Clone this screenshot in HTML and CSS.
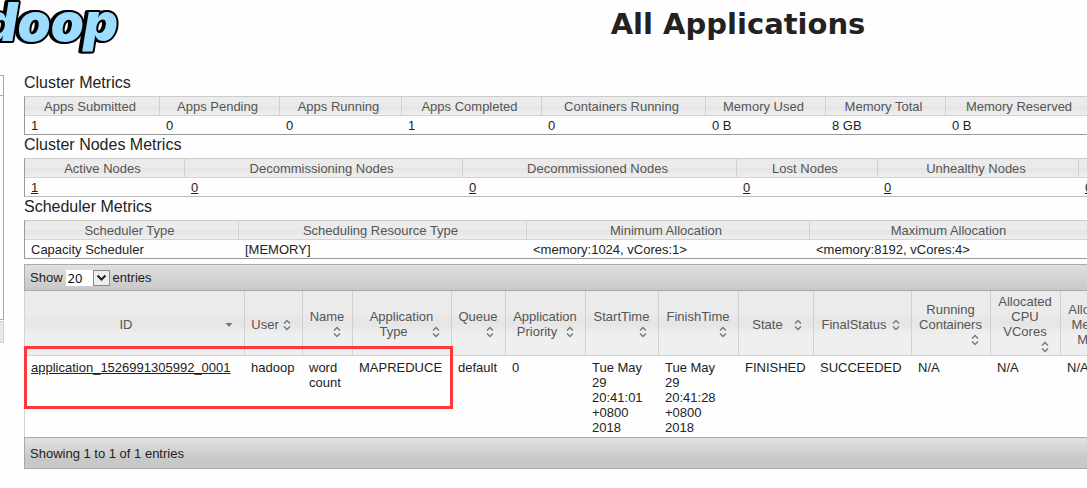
FILE: index.html
```html
<!DOCTYPE html>
<html lang="en">
<head>
<meta charset="utf-8">
<title>All Applications</title>
<link rel="stylesheet" href="styles.css">
</head>
<body>
<header class="header">
  <svg class="logo" viewBox="0 0 124 56" role="img" aria-label="hadoop">
    <text class="logo-word" text-anchor="end" x="118" y="41">doop</text>
  </svg>
  <h1 class="title">All Applications</h1>
</header>
<div class="layout">
  <aside class="sidebar">
    <div class="nav-head"></div>
    <div class="nav-body"></div>
    <div class="nav-foot"></div>
  </aside>
  <main class="content">
    <h2 class="section-title">Cluster Metrics</h2>
    <table class="metrics">
      <colgroup><col class="w135"><col class="w120"><col class="w122"><col class="w140"><col class="w164"><col class="w120"><col class="w120"><col class="w151"><col></colgroup>
      <thead><tr><th>Apps Submitted</th><th>Apps Pending</th><th>Apps Running</th><th>Apps Completed</th><th>Containers Running</th><th>Memory Used</th><th>Memory Total</th><th>Memory Reserved</th><th></th></tr></thead>
      <tbody><tr><td>1</td><td>0</td><td>0</td><td>1</td><td>0</td><td>0 B</td><td>8 GB</td><td>0 B</td><td></td></tr></tbody>
    </table>
    <h2 class="section-title">Cluster Nodes Metrics</h2>
    <table class="metrics metrics-light">
      <colgroup><col class="w160"><col class="w278"><col class="w274"><col class="w141"><col class="w201"><col></colgroup>
      <thead><tr><th>Active Nodes</th><th>Decommissioning Nodes</th><th>Decommissioned Nodes</th><th>Lost Nodes</th><th>Unhealthy Nodes</th><th></th></tr></thead>
      <tbody><tr><td><a href="#">1</a></td><td><a href="#">0</a></td><td><a href="#">0</a></td><td><a href="#">0</a></td><td><a href="#">0</a></td><td><a href="#">0</a></td></tr></tbody>
    </table>
    <h2 class="section-title">Scheduler Metrics</h2>
    <table class="metrics">
      <colgroup><col class="w214"><col class="w288"><col class="w283"><col class="w282"><col></colgroup>
      <thead><tr><th>Scheduler Type</th><th>Scheduling Resource Type</th><th>Minimum Allocation</th><th>Maximum Allocation</th><th></th></tr></thead>
      <tbody><tr><td>Capacity Scheduler</td><td>[MEMORY]</td><td>&lt;memory:1024, vCores:1&gt;</td><td>&lt;memory:8192, vCores:4&gt;</td><td></td></tr></tbody>
    </table>

    <div class="toolbar">
      <label for="length">Show</label>
      <span class="length">
        <select id="length" class="length-select"><option>20</option></select>
        <svg class="length-arrow" viewBox="0 0 17 16" aria-hidden="true"><rect x="0.5" y="0.5" width="16" height="15"/><path d="M4.5 5.5l4 4 4-4"/></svg>
      </span>
      <span>entries</span>
    </div>
    <svg class="defs" aria-hidden="true">
      <symbol id="sort" viewBox="0 0 16 16"><path d="M5 6.5l3-3 3 3M5 9.5l3 3 3-3" fill="none" stroke="#777" stroke-width="1.4"/></symbol>
      <symbol id="down" viewBox="0 0 16 16"><path d="M4.500 6h7l-3.500 4z" fill="#777"/></symbol>
    </svg>
    <div class="apps-wrap">
      <table class="apps">
        <colgroup><col class="w220"><col class="w58"><col class="w50"><col class="w99"><col class="w54"><col class="w80"><col class="w73"><col class="w80"><col class="w75"><col class="w98"><col class="w79"><col class="w70"><col></colgroup>
        <thead><tr>
          <th><button class="sort">ID<svg><use href="#down"/></svg></button></th>
          <th><button class="sort">User<svg><use href="#sort"/></svg></button></th>
          <th><button class="sort">Name<svg><use href="#sort"/></svg></button></th>
          <th><button class="sort">Application Type<svg><use href="#sort"/></svg></button></th>
          <th><button class="sort">Queue<svg><use href="#sort"/></svg></button></th>
          <th><button class="sort">Application Priority<svg><use href="#sort"/></svg></button></th>
          <th><button class="sort">StartTime<svg><use href="#sort"/></svg></button></th>
          <th><button class="sort">FinishTime<svg><use href="#sort"/></svg></button></th>
          <th><button class="sort">State<svg><use href="#sort"/></svg></button></th>
          <th><button class="sort">FinalStatus<svg><use href="#sort"/></svg></button></th>
          <th><button class="sort">Running Containers<svg><use href="#sort"/></svg></button></th>
          <th><button class="sort">Allocated CPU VCores<svg><use href="#sort"/></svg></button></th>
          <th><button class="sort">Allocated Memory MB<svg><use href="#sort"/></svg></button></th>
        </tr></thead>
        <tbody><tr>
          <td><a href="#">application_1526991305992_0001</a></td><td>hadoop</td><td>word count</td><td>MAPREDUCE</td><td>default</td><td>0</td><td class="time">Tue May 29 20:41:01 +0800 2018</td><td class="time">Tue May 29 20:41:28 +0800 2018</td><td>FINISHED</td><td>SUCCEEDED</td><td>N/A</td><td>N/A</td><td>N/A</td>
        </tr></tbody>
      </table>
      <div class="highlight"></div>
    </div>
    <div class="footer">Showing 1 to 1 of 1 entries</div>
  </main>
</div>
</body>
</html>
```

FILE: styles.css
```css
* { box-sizing: border-box; }
html { overflow: hidden; }
body {
  margin: 0;
  overflow: hidden;
  background: #fefefe;
  color: #222;
  font: 13px/15px "Liberation Sans", Arial, sans-serif;
}
a { color: #222; text-decoration: underline; }

.header {
  display: flex;
  align-items: flex-start;
  height: 73px;
  margin-right: -269px;
}
.logo { width: 124px; height: 56px; flex: none; margin-right: -4px; }
.logo-word {
  font: italic 900 53px Inter, "DejaVu Sans", sans-serif;
  fill: #9bdcff;
  stroke: #000;
  stroke-width: 4;
  stroke-linejoin: round;
  paint-order: stroke;
  filter: drop-shadow(-2px 0 0 #000);
}
.title {
  flex: 1;
  margin: 0;
  padding-top: 6px;
  text-align: center;
  font: bold 29px/36px "DejaVu Sans", Verdana, sans-serif;
}

.layout { display: flex; gap: 20px; margin-right: -44px; }
.sidebar { flex: none; width: 4px; padding-top: 2px; }
.nav-head, .nav-body, .nav-foot { border: 1px solid #aaa; border-left: 0; }
.nav-head { height: 21px; }
.nav-body { height: 224px; border-top: 0; }
.nav-foot { height: 22px; margin-top: 1px; border-color: #d3d3d3; background: #e9e9e9; }
.content { flex: 1; min-width: 0; }

.section-title { margin: 0; padding-bottom: 4px; font-size: 16px; line-height: 19px; font-weight: normal; }
table { width: 100%; border-collapse: separate; border-spacing: 0; table-layout: fixed; }
th {
  border-right: 1px solid #d0d0d0;
  border-bottom: 1px solid #d3d3d3;
  background: linear-gradient(#ebebeb 50%, #e4e4e4 50%, #efefef);
  color: #555;
  font-weight: normal;
}
.metrics { border: 1px solid #999; border-top-color: #ccc; }
.metrics-light { border-bottom-color: #bbb; }
.metrics th { height: 19px; padding: 2px 8px 1px 4px; }
.metrics td { height: 18px; padding: 2px 6px 1px; }

.toolbar {
  display: flex;
  align-items: center;
  gap: 3px;
  height: 27px;
  margin-top: 5px;
  padding: 0 5px;
  border: 1px solid #aaa;
  background: linear-gradient(#e0e0e0, #c8c8c8);
}
.length { position: relative; width: 44px; height: 16px; }
.length-select {
  display: block;
  width: 100%;
  height: 100%;
  padding: 0 2px;
  border: 0;
  appearance: none;
  background: #fff;
  color: #111;
  font: 13px/16px "Noto Sans", sans-serif;
}
.length-arrow {
  position: absolute;
  top: 0;
  right: 0;
  width: 17px;
  height: 16px;
  fill: #eee;
  stroke: #888;
  pointer-events: none;
}
.length-arrow path { fill: none; stroke: #222; stroke-width: 2; }

.defs { display: block; width: 0; height: 0; }
.apps-wrap { position: relative; }
.apps { border-left: 1px solid #d3d3d3; }
.apps th { height: 65px; padding: 3px 7px 0 6px; background: linear-gradient(#ebebeb 35%, #e5e5e5 50%, #efefef 70%); }
.apps td { height: 81px; padding: 4px 2px 2px 6px; vertical-align: top; }
.apps .time { padding-right: 12px; }
.sort {
  display: block;
  width: 100%;
  padding: 0;
  border: 0;
  background: none;
  color: inherit;
  font: inherit;
  text-align: center;
  white-space: normal;
}
.sort svg { float: right; width: 16px; height: 16px; }
.highlight {
  position: absolute;
  top: 55px;
  left: 0;
  width: 429px;
  height: 63px;
  border: 3px solid #fe3838;
}
.footer {
  height: 32px;
  padding: 8px 5px;
  border: 1px solid #aaa;
  background: linear-gradient(#e2e2e2, #c8c8c8 70%);
}

.w50 { width: 50px; }
.w54 { width: 54px; }
.w58 { width: 58px; }
.w70 { width: 70px; }
.w73 { width: 73px; }
.w75 { width: 75px; }
.w79 { width: 79px; }
.w80 { width: 80px; }
.w98 { width: 98px; }
.w99 { width: 99px; }
.w120 { width: 120px; }
.w122 { width: 122px; }
.w135 { width: 135px; }
.w140 { width: 140px; }
.w141 { width: 141px; }
.w151 { width: 151px; }
.w160 { width: 160px; }
.w164 { width: 164px; }
.w201 { width: 201px; }
.w214 { width: 214px; }
.w220 { width: 220px; }
.w274 { width: 274px; }
.w278 { width: 278px; }
.w282 { width: 282px; }
.w283 { width: 283px; }
.w288 { width: 288px; }
```
